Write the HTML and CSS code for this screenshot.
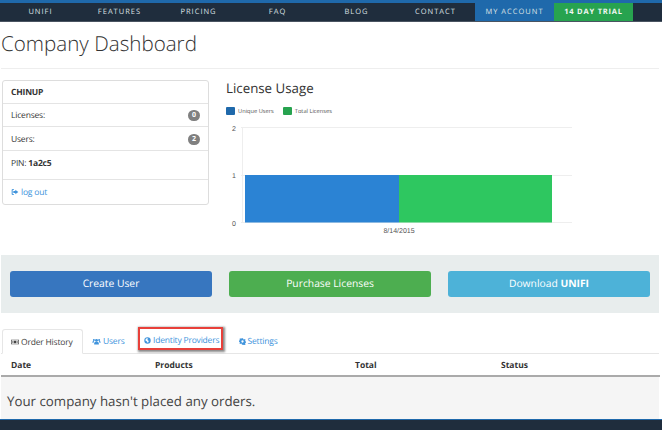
FILE: index.html
```html
<!doctype html>
<html>
  <head>
    <meta charset="utf-8">
    <title>Company Dashboard</title>
    <link rel="stylesheet" href="styles.css">
  </head>
  <body>
    <nav class="nav">
      <a>UNIFI</a>
      <a>FEATURES</a>
      <a>PRICING</a>
      <a>FAQ</a>
      <a>BLOG</a>
      <a>CONTACT</a>
      <a class="account">MY ACCOUNT</a>
      <a class="trial">14 DAY TRIAL</a>
    </nav>
    <main class="page">
      <h1>Company Dashboard</h1>
      <div class="summary">
        <ul class="panel">
          <li class="company">CHINUP</li>
          <li>Licenses: <span class="badge">0</span></li>
          <li class="users">Users: <span class="badge">2</span></li>
          <li class="pin">PIN: <b>1a2c5</b></li>
          <li class="logout">
            <a>
              <svg class="icon" viewBox="0 0 12 12"><path d="M4.5 1.5H2.5a1.5 1.5 0 0 0-1.5 1.5v6a1.5 1.5 0 0 0 1.5 1.5h2V9.300H2.500V2.700h2z"/><path d="M6.500 2.500 11 6l-4.500 3.500V7.500H3.500v-3h3z"/></svg>
              log out
            </a>
          </li>
        </ul>
        <section class="usage">
          <h2>License Usage</h2>
          <div class="legend">
            <span class="swatch swatch-blue"></span>Unique Users
            <span class="swatch swatch-green"></span>Total Licenses
          </div>
          <svg class="chart" width="360" height="112" viewBox="0 0 360 112">
            <path class="grid" d="M15 1.500H346M15 49.500H346M15 96.500H346M16.500 1V97"/>
            <rect x="19" y="49" width="154" height="47.500" fill="#2b83d4"/>
            <rect x="173" y="49" width="153" height="47.500" fill="#2ec760"/>
            <text x="8" y="5" text-anchor="middle">2</text>
            <text x="8" y="52" text-anchor="middle">1</text>
            <text x="8" y="100" text-anchor="middle">0</text>
            <text x="173" y="107" text-anchor="middle">8/14/2015</text>
          </svg>
        </section>
      </div>
      <div class="actions">
        <a class="btn btn-blue">Create User</a>
        <a class="btn btn-green">Purchase Licenses</a>
        <a class="btn btn-cyan">Download <b>UNIFI</b></a>
      </div>
      <div class="tabs">
        <a class="tab active">
          <svg class="icon" viewBox="0 0 12 12"><path fill-rule="evenodd" d="M0 2.500h12v7H0zM1 3.500v5h10v-5zM6 4a2 2 0 1 0 0 4 2 2 0 0 0 0-4zM2 5h1.500v2H2zM8.500 5H10v2H8.500z"/></svg>
          Order History
        </a>
        <a class="tab">
          <svg class="icon icon-wide" viewBox="0 0 14 12"><circle cx="7" cy="4" r="2.500"/><circle cx="2.500" cy="3.500" r="1.700"/><circle cx="11.500" cy="3.500" r="1.700"/><path d="M3 11V9a4 3 0 0 1 8 0v2zM0 8V7a2.200 2 0 0 1 3-1.500A5 5 0 0 0 2 8zM14 8V7a2.200 2 0 0 0-3-1.500A5 5 0 0 1 12 8z"/></svg>
          Users
        </a>
        <a class="tab flagged">
          <svg class="icon" viewBox="0 0 12 12"><path fill-rule="evenodd" d="M6 .5a5.500 5.500 0 1 0 0 11 5.500 5.500 0 0 0 0-11zM3 3l2.500-1L7 3 5.500 5 7.500 6 8 8.500 6 10 5 7.500 2.500 6z"/></svg>
          Identity Providers
        </a>
        <a class="tab">
          <svg class="icon" viewBox="0 0 12 12"><path fill-rule="evenodd" d="M5 .5h2l.3 1.500 1.300.6 1.300-.8 1.400 1.400-.8 1.300.6 1.300 1.400.2v2l-1.500.3-.6 1.300.9 1.300-1.400 1.400-1.300-.8-1.300.5L7 11.500H5l-.3-1.500-1.300-.5-1.300.8L.7 9.400l.8-1.300L1 6.800-.5 6.500v-2L1 4.300l.5-1.300-.8-1.300L2.100.3l1.300.8 1.300-.5zM6 4a2 2 0 1 0 0 4 2 2 0 0 0 0-4z"/></svg>
          Settings
        </a>
      </div>
      <table class="orders">
        <thead>
          <tr>
            <th class="col-date">Date</th>
            <th class="col-products">Products</th>
            <th class="col-total">Total</th>
            <th>Status</th>
          </tr>
        </thead>
      </table>
      <p class="empty">Your company hasn't placed any orders.</p>
    </main>
    <footer class="footer"></footer>
  </body>
</html>
```

FILE: styles.css
```css
* {
  box-sizing: border-box;
}
body {
  margin: 0;
  height: 430px;
  overflow: hidden;
  background: #fff;
  color: #333;
  font-family: "Open Sans", sans-serif;
  font-size: 8.500px;
  letter-spacing: -.2px;
  text-rendering: geometricPrecision;
}
.nav {
  display: flex;
  height: 22px;
  padding-left: 1px;
  background: #1f2d3d;
  border-top: 3px solid #1f69ab;
  border-bottom: 1px solid #4a5461;
}
.nav a {
  width: 79px;
  line-height: 18px;
  text-align: center;
  font-size: 7.500px;
  letter-spacing: 1px;
  color: #dde1e5;
}
.nav .account {
  background: #1f69ab;
}
.nav .trial {
  background: #27a34f;
  color: #f2f6f3;
  font-weight: 700;
  letter-spacing: .8px;
}
.page {
  width: 659px;
  height: 397px;
}
h1 {
  margin: 0 0 0 1px;
  height: 47px;
  padding-top: 8px;
  line-height: 28px;
  border-bottom: 1px solid #eee;
  font-size: 20.600px;
  font-weight: 300;
  letter-spacing: 0;
}
.summary {
  display: flex;
  height: 186px;
  padding: 11px 0 0 2px;
}
.panel {
  width: 207px;
  height: 125px;
  margin: 0;
  padding: 0;
  list-style: none;
  border: 1px solid #ddd;
  border-radius: 3px;
}
.panel li {
  display: flex;
  align-items: center;
  justify-content: space-between;
  height: 23px;
  padding: 1px 8px 0;
  border-bottom: 1px solid #e4e4e4;
}
.panel .company {
  font-weight: 700;
}
.panel .users {
  height: 24px;
}
.panel .pin {
  display: block;
  height: 29px;
  padding-top: 6px;
  line-height: 14px;
}
.panel .logout {
  border-bottom: 0;
}
.badge {
  width: 12px;
  height: 11px;
  border-radius: 6px;
  background: #808080;
  color: #fff;
  line-height: 11px;
  text-align: center;
  font-size: 7px;
  font-weight: 700;
  letter-spacing: 0;
}
.logout a,
.tab {
  color: #4094dc;
}
.icon {
  width: 8px;
  height: 8px;
  fill: currentColor;
  vertical-align: -1px;
}
.usage {
  margin-left: 17px;
}
h2 {
  margin: -2px 0 0;
  line-height: 20px;
  font-size: 13.300px;
  font-weight: 400;
  letter-spacing: 0;
}
.legend {
  display: flex;
  align-items: center;
  height: 12px;
  margin-top: 7px;
  color: #555;
  font-size: 5.700px;
  letter-spacing: 0;
}
.swatch {
  width: 9px;
  height: 8px;
  margin-right: 3px;
  border-radius: 1px;
}
.swatch-blue {
  background: #1f69ab;
}
.swatch-green {
  margin-left: 9px;
  background: #27a34f;
}
.chart {
  display: block;
  margin: 9px 0 0;
}
.chart .grid {
  fill: none;
  stroke: #eee;
}
.chart text {
  font-family: "Liberation Sans", sans-serif;
  font-size: 7px;
  letter-spacing: 0;
  fill: #555;
}
.actions {
  display: flex;
  justify-content: space-between;
  align-items: center;
  height: 58px;
  margin-left: 1px;
  padding: 0 9px;
  background: #e8eded;
}
.btn {
  width: 202px;
  height: 26px;
  border-radius: 3px;
  line-height: 27px;
  text-align: center;
  color: #fff;
  font-size: 10.300px;
  letter-spacing: 0;
}
.btn-blue {
  background: #3776bf;
}
.btn-green {
  background: #4dae50;
}
.btn-cyan {
  background: #4db2d8;
}
.tabs {
  display: flex;
  align-items: flex-start;
  height: 41px;
  margin: 0 0 0 1px;
  padding: 16px 0 0 1px;
  border-bottom: 1px solid #e6e6e6;
}
.tab {
  height: 25px;
  padding: 0 9px;
  line-height: 25px;
  white-space: nowrap;
}
.tab + .tab .icon {
  width: 7px;
  height: 7px;
  vertical-align: -.5px;
}
.tab + .tab .icon-wide {
  width: 9px;
}
.tab.active {
  width: 81px;
  padding: 0 8px;
  background: #fff;
  border: 1px solid #e6e6e6;
  border-bottom-color: #fff;
  border-radius: 3px 3px 0 0;
  color: #444;
}
.tab.flagged {
  width: 85px;
  height: 23px;
  margin: -2px 7px 0 4px;
  padding: 0 0 0 4.500px;
  line-height: 23px;
  border: 2px solid #e8403a;
  box-shadow: 1px 1px 2px 1px #8a8a8a;
}
.orders {
  width: 100%;
  margin-left: 1px;
  border-collapse: collapse;
  table-layout: fixed;
  border-bottom: 2px solid #aaa;
}
.orders th {
  height: 22px;
  padding: 2px 0 0 10px;
  text-align: left;
  font-weight: 700;
  font-size: 8.500px;
  letter-spacing: 0;
}
.col-date {
  width: 144px;
}
.col-products {
  width: 200px;
}
.col-total {
  width: 146px;
}
.empty {
  height: 42px;
  margin: 0 0 0 1px;
  padding: 0 0 0 6px;
  background: #f5f5f5;
  line-height: 49px;
  font-size: 13.300px;
  letter-spacing: 0;
  color: #444;
}
.footer {
  height: 11px;
  background: #1f2d3d;
  border-top: 1px solid #1f69ab;
}
```
